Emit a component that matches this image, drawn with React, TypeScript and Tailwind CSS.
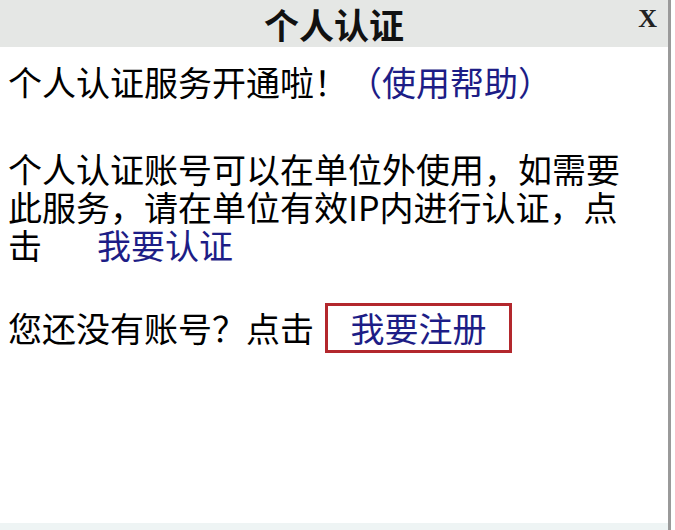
export default function App() {
  const cjk = "font-['Noto_Sans_CJK_SC','Noto_Sans',sans-serif]";
  const link = "text-[#1d1d86]";

  return (
    <div className={`h-[530px] w-[675px] bg-white ${cjk}`}>
      <div className="flex h-[530px] w-[671px] flex-col border-r-[3px] border-[#9a9a9a]">
        <div className="relative flex h-[49px] items-center justify-center border-b-[2px] border-white bg-[#e5e7e5]">
          <span className="text-[35px] font-bold leading-[44px] text-[#111]">个人认证</span>
          <span className="absolute right-[11px] top-[6px] font-['Liberation_Serif',serif] text-[26px] font-bold leading-none text-[#222]">
            X
          </span>
        </div>

        <div className="flex-1 px-[8px] pt-[14px] text-[34px] leading-[38px] text-black">
          <p className="whitespace-nowrap">
            个人认证服务开通啦！<span className={link}>（使用帮助）</span>
          </p>

          <p className="mt-[49px] whitespace-nowrap">
            个人认证账号可以在单位外使用，如需要
            <br />
            此服务，请在单位有效IP内进行认证，点
            <br />
            击<span className={`ml-[55px] ${link}`}>我要认证</span>
          </p>

          <div className="mt-[39px] flex items-center whitespace-nowrap">
            <span>您还没有账号？点击</span>
            <span
              className={`ml-[11px] flex h-[50px] w-[187px] items-center justify-center border-[3px] border-[#b3282d] ${link}`}
            >
              我要注册
            </span>
          </div>
        </div>

        <div className="h-[7px] bg-[#eef4f4]" />
      </div>
    </div>
  );
}
